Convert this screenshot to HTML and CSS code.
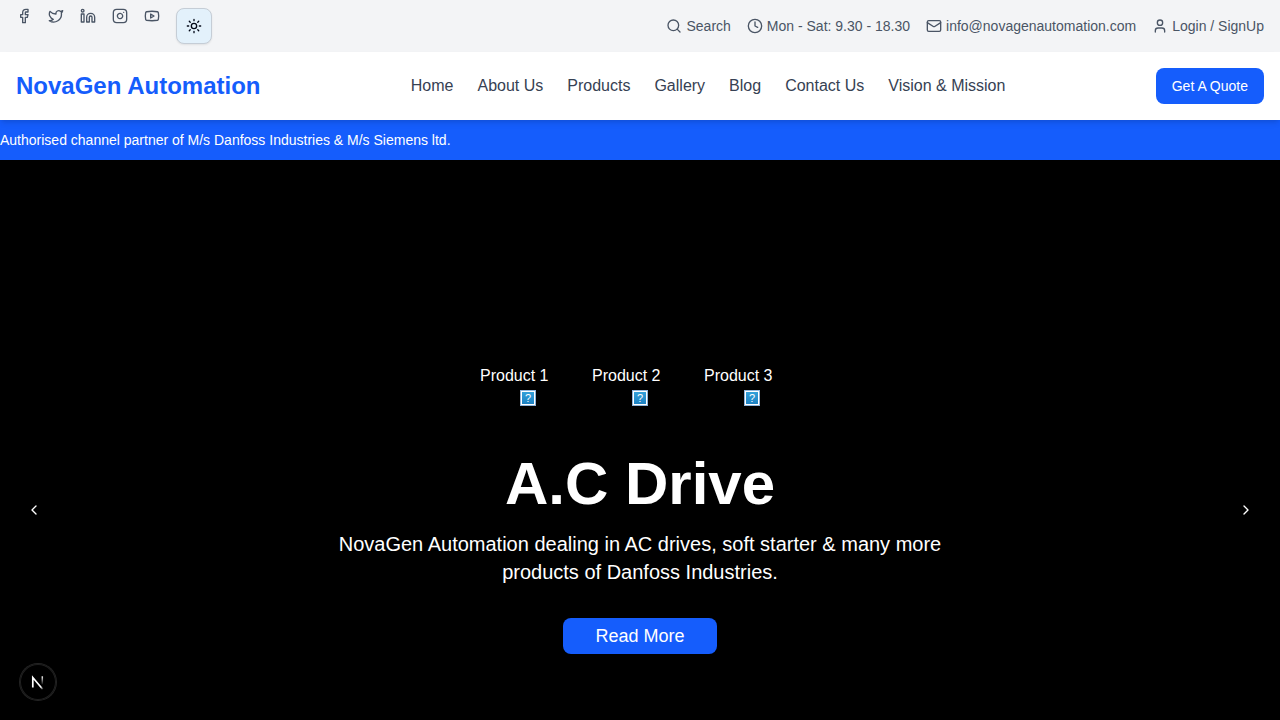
FILE: index.html
```html
<!DOCTYPE html>
<html lang="en">
<head>
<meta charset="utf-8">
<meta name="viewport" content="width=device-width, initial-scale=1">
<title>NovaGen Automation</title>
<link rel="stylesheet" href="styles.css">
</head>
<body>
<div class="topbar">
  <div class="social">
    <a href="#" aria-label="Facebook"><svg class="icon" viewBox="0 0 24 24"><path d="M18 2h-3a5 5 0 0 0-5 5v3H7v4h3v8h4v-8h3l1-4h-4V7a1 1 0 0 1 1-1h3z"/></svg></a>
    <a href="#" aria-label="Twitter"><svg class="icon" viewBox="0 0 24 24"><path d="M22 4s-.7 2.1-2 3.4c1.6 10-9.4 17.3-18 11.6 2.2.1 4.4-.6 6-2C3 15.5.5 9.6 3 5c2.2 2.6 5.6 4.1 9 4-.9-4.2 4-6.6 7-3.8 1.1 0 3-1.2 3-1.2z"/></svg></a>
    <a href="#" aria-label="LinkedIn"><svg class="icon" viewBox="0 0 24 24"><path d="M16 8a6 6 0 0 1 6 6v7h-4v-7a2 2 0 0 0-4 0v7h-4v-7a6 6 0 0 1 6-6z"/><rect x="2" y="9" width="4" height="12"/><circle cx="4" cy="4" r="2"/></svg></a>
    <a href="#" aria-label="Instagram"><svg class="icon" viewBox="0 0 24 24"><rect x="2" y="2" width="20" height="20" rx="5"/><path d="M16 11.37A4 4 0 1 1 12.63 8 4 4 0 0 1 16 11.37zM17.5 6.5h.01"/></svg></a>
    <a href="#" aria-label="YouTube"><svg class="icon" viewBox="0 0 24 24"><path d="M2.5 17a24.12 24.12 0 0 1 0-10 2 2 0 0 1 1.4-1.4 49.56 49.56 0 0 1 16.2 0A2 2 0 0 1 21.5 7a24.12 24.12 0 0 1 0 10 2 2 0 0 1-1.4 1.4 49.55 49.55 0 0 1-16.2 0A2 2 0 0 1 2.5 17"/><path d="m10 15 5-3-5-3z"/></svg></a>
    <button class="theme" type="button" aria-label="Toggle theme"><svg class="icon" viewBox="0 0 24 24"><circle cx="12" cy="12" r="4"/><path d="M12 2v2M12 20v2m-7.07-17.07 1.41 1.41M17.66 17.66l1.41 1.41M2 12h2M20 12h2M6.34 17.66l-1.41 1.41M19.07 4.93l-1.41 1.41"/></svg></button>
  </div>
  <div class="contact">
    <a href="#"><svg class="icon" viewBox="0 0 24 24"><circle cx="11" cy="11" r="8"/><path d="m21 21-4.3-4.3"/></svg>Search</a>
    <span><svg class="icon" viewBox="0 0 24 24"><circle cx="12" cy="12" r="10"/><path d="M12 6v6l4 2"/></svg>Mon - Sat: 9.30 - 18.30</span>
    <a href="#"><svg class="icon" viewBox="0 0 24 24"><rect x="2" y="4" width="20" height="16" rx="2"/><path d="m22 7-8.97 5.7a1.94 1.94 0 0 1-2.06 0L2 7"/></svg>info@novagenautomation.com</a>
    <a href="#"><svg class="icon" viewBox="0 0 24 24"><path d="M19 21v-2a4 4 0 0 0-4-4H9a4 4 0 0 0-4 4v2"/><circle cx="12" cy="7" r="4"/></svg>Login / SignUp</a>
  </div>
</div>
<header class="header">
  <a class="brand" href="#">NovaGen Automation</a>
  <nav class="nav">
    <a href="#">Home</a>
    <a href="#">About Us</a>
    <a href="#">Products</a>
    <a href="#">Gallery</a>
    <a href="#">Blog</a>
    <a href="#">Contact Us</a>
    <a href="#">Vision &amp; Mission</a>
  </nav>
  <button class="button quote" type="button">Get A Quote</button>
</header>
<p class="notice">Authorised channel partner of M/s Danfoss Industries &amp; M/s Siemens ltd.</p>
<main class="hero">
  <div class="products">
    <div class="product">Product 1<span class="missing">?</span></div>
    <div class="product">Product 2<span class="missing">?</span></div>
    <div class="product">Product 3<span class="missing">?</span></div>
  </div>
  <h1 class="title">A.C Drive</h1>
  <p class="lead">NovaGen Automation dealing in AC drives, soft starter &amp; many more products of Danfoss Industries.</p>
  <button class="button more" type="button">Read More</button>
  <button class="arrow prev" type="button" aria-label="Previous slide"><svg class="icon" viewBox="0 0 24 24"><path d="m15 18-6-6 6-6"/></svg></button>
  <button class="arrow next" type="button" aria-label="Next slide"><svg class="icon" viewBox="0 0 24 24"><path d="m9 18 6-6-6-6"/></svg></button>
</main>
<button class="devtools" type="button" aria-label="Developer tools">
  <svg width="36" height="36" viewBox="0 0 36 36" fill="none">
    <defs>
      <linearGradient id="diagonal" gradientUnits="userSpaceOnUse" x1="18" y1="18" x2="24" y2="25"><stop offset="0.6" stop-color="#fff"/><stop offset="1" stop-color="#fff" stop-opacity="0"/></linearGradient>
      <linearGradient id="stem" gradientUnits="userSpaceOnUse" x1="22" y1="12" x2="22" y2="21"><stop stop-color="#fff"/><stop offset="1" stop-color="#fff" stop-opacity="0"/></linearGradient>
    </defs>
    <path d="M12.8 23.5V13.5L22.7 25.3" stroke="url(#diagonal)" stroke-width="1.7"/>
    <path d="M22.3 12.3V20.5" stroke="url(#stem)" stroke-width="1.5"/>
  </svg>
</button>
</body>
</html>
```
FILE: styles.css
```css
* {
  box-sizing: border-box;
}

body {
  margin: 0;
  min-height: 100vh;
  display: flex;
  flex-direction: column;
  background: #fff;
  font: 16px/24px "Liberation Sans", Arial, sans-serif;
}

a {
  color: inherit;
  text-decoration: none;
}

button {
  font-family: inherit;
  cursor: pointer;
}

.icon {
  display: block;
  flex: none;
  width: 16px;
  height: 16px;
  fill: none;
  stroke: currentColor;
  stroke-width: 2;
  stroke-linecap: round;
  stroke-linejoin: round;
}

.topbar {
  display: flex;
  justify-content: space-between;
  align-items: center;
  padding: 8px 16px;
  background: #f3f4f6;
  color: #4a5565;
  font-size: 14px;
  line-height: 20px;
}

.social {
  display: flex;
  align-items: flex-start;
  gap: 16px;
}

.theme {
  display: grid;
  place-items: center;
  width: 36px;
  height: 36px;
  padding: 0;
  border: 1px solid #c5cdd6;
  border-radius: 8px;
  background: #e3f1fb;
  color: #020817;
  box-shadow: 0 1px 2px rgb(0 0 0 / 8%);
}

.contact {
  display: flex;
  gap: 16px;
}

.contact > * {
  display: flex;
  align-items: center;
  gap: 4px;
}

.header {
  position: relative;
  z-index: 1;
  display: flex;
  justify-content: space-between;
  align-items: center;
  padding: 16px;
  background: #fff;
  color: #364153;
  box-shadow: 0 4px 6px -1px rgb(0 0 0 / 10%), 0 2px 4px -2px rgb(0 0 0 / 10%);
}

.brand {
  color: #155dfc;
  font-size: 24px;
  font-weight: bold;
  line-height: 32px;
}

.nav {
  display: flex;
  gap: 24px;
}

.button {
  height: 36px;
  border: 0;
  border-radius: 8px;
  background: #155dfc;
  color: #fff;
}

.quote {
  padding: 0 16px;
  font-size: 14px;
}

.notice {
  margin: 0;
  padding: 10px 0;
  background: #155dfc;
  color: #fff;
  font-size: 14px;
  line-height: 20px;
}

.hero {
  position: relative;
  flex: 1;
  display: flex;
  flex-direction: column;
  align-items: center;
  padding: 204px 16px 64px;
  background: #000;
  color: #fff;
}

.products {
  display: flex;
  gap: 16px;
  margin-bottom: 48px;
}

.product {
  display: flex;
  flex-direction: column;
  gap: 2px;
  width: 96px;
}

.missing {
  align-self: center;
  width: 16px;
  height: 16px;
  border: 1px solid #8fb4d9;
  outline: 1px solid #fff;
  outline-offset: -2px;
  background: linear-gradient(#35a3dc, #1b7fc0);
  font-size: 11px;
  line-height: 14px;
  text-align: center;
}

.title {
  margin: 0 0 16px;
  font-size: 60px;
  line-height: 60px;
}

.lead {
  max-width: 672px;
  margin: 0 0 32px;
  font-size: 20px;
  line-height: 28px;
  text-align: center;
}

.more {
  padding: 0 32px;
  font-size: 18px;
}

.arrow {
  position: absolute;
  top: 62.5%;
  display: grid;
  place-items: center;
  width: 36px;
  height: 36px;
  margin-top: -18px;
  padding: 0;
  border: 0;
  background: none;
  color: #fff;
}

.prev {
  left: 16px;
}

.next {
  right: 16px;
}

.devtools {
  position: fixed;
  bottom: 20px;
  left: 20px;
  z-index: 2;
  width: 36px;
  height: 36px;
  padding: 0;
  border: 0;
  border-radius: 50%;
  background: #000;
  box-shadow: 0 0 0 1px #242424, inset 0 0 0 1px #202020;
}

.devtools svg {
  display: block;
}
```
